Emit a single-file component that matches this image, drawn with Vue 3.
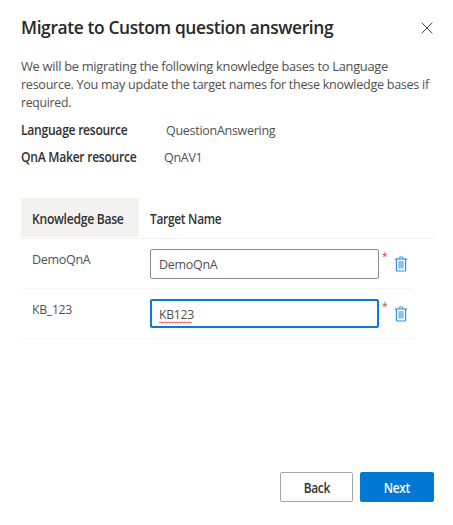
<script setup>
import { ref } from 'vue'

const rows = ref([
  { name: 'DemoQnA', target: 'DemoQnA', active: false },
  { name: 'KB_123', target: 'KB123', active: true },
])
</script>

<template>
  <main class="panel">
    <header class="head">
      <h1>Migrate to Custom question answering</h1>
      <button class="close" aria-label="Close">
        <svg width="12" height="12" viewBox="0 0 12 12"><path d="M.6.6l10.8 10.8M11.4.6L.6 11.4" fill="none" stroke="#444" stroke-width="1" /></svg>
      </button>
    </header>
    <p class="intro">
      <span class="fit l1">We will be migrating the following knowledge bases to Language</span>
      <span class="fit l2">resource. You may update the target names for these knowledge bases if</span>
      <span class="fit l3">required.</span>
    </p>
    <dl class="info">
      <div class="pair"><dt><span class="fit bold">Language resource</span></dt><dd class="fit">QuestionAnswering</dd></div>
      <div class="pair second"><dt class="maker"><span class="fit bold">QnA Maker resource</span></dt><dd class="fit">QnAV1</dd></div>
    </dl>
    <section class="table">
      <div class="thead">
        <div class="th kb"><span class="fit bold">Knowledge Base</span></div>
        <div class="th tn"><span class="fit tight">Target Name</span></div>
      </div>
      <div v-for="row in rows" :key="row.name" class="row">
        <div class="name"><span class="fit" :class="{ digits: row.active }">{{ row.name }}</span></div>
        <div class="field" :class="{ active: row.active }">
          <span class="fit" :class="{ digits: row.active }">{{ row.target }}<svg v-if="row.active" class="squiggle" width="38" height="3" viewBox="0 0 38 3"><path d="M0 2.3l1.5-1.6 1.5 1.6 1.5-1.6 1.5 1.6 1.5-1.6 1.5 1.6 1.5-1.6 1.5 1.6 1.5-1.6 1.5 1.6 1.5-1.6 1.5 1.6 1.5-1.6 1.5 1.6 1.5-1.6 1.5 1.6 1.5-1.6 1.5 1.6 1.5-1.6 1.5 1.6 1.5-1.6 1.5 1.6 1.5-1.6 1.5 1.6" fill="none" stroke="#ee3038" stroke-width=".9" /></svg></span>
        </div>
        <span class="star">*</span>
        <button class="trash" aria-label="Delete">
          <svg width="12" height="16" viewBox="0 0 12 16">
            <path d="M4 2.5v-1q0-.5.6-.5h2.8q.6 0 .6.5v1" fill="none" stroke="#3292df" />
            <path d="M0 3h12" stroke="#3292df" stroke-width="1.2" />
            <path d="M1.4 3v11q0 1 1 1h7.2q1 0 1-1V3" fill="none" stroke="#3292df" stroke-width="1.2" />
            <path d="M3.3 5h5.4v7.5H3.3z" fill="#b5d9f5" />
            <path d="M4.2 5v7.5M6 5v7.5M7.8 5v7.5" stroke="#63aeea" stroke-width=".9" />
          </svg>
        </button>
      </div>
    </section>
    <footer class="actions">
      <button class="btn back"><span>Back</span></button>
      <button class="btn next"><span>Next</span></button>
    </footer>
  </main>
</template>

<style>
body { margin: 0; background: #fff; }
</style>

<style scoped>
* { box-sizing: border-box; }
.panel {
  width: 453px; height: 525px; padding: 14px 19px 23px 21px;
  display: flex; flex-direction: column; background: #fff;
  font-family: "Open Sans", "Segoe UI", sans-serif; font-size: 13.4px; color: #505050;
  letter-spacing: -0.3px; white-space: nowrap;
}
button { padding: 0; border: 0; background: none; font: inherit; letter-spacing: inherit; display: flex; align-items: center; justify-content: center; }
.fit { position: relative; display: inline-block; transform: scaleX(.933); transform-origin: 0 50%; }
.bold { transform: scaleX(.905); }
.tight { transform: scaleX(.888); }
.digits { transform: scaleX(.912); }
.head { display: flex; justify-content: space-between; height: 26px; }
h1 { margin: 0; font-size: 18.5px; line-height: 26px; font-weight: 600; color: #292827; letter-spacing: -0.4px; transform: scaleX(.94); transform-origin: 0 50%; }
.close { width: 12px; height: 12px; margin: 8px 1px 0 0; }
.intro { margin: 17px 0 0; line-height: 18px; display: flex; flex-direction: column; align-items: flex-start; }
.l1 { transform: scaleX(.96); }
.l2 { transform: scaleX(.94); }
.l3 { transform: scaleX(.915); }
.info { margin: 10px 0 0; }
.pair { display: flex; height: 18px; line-height: 18px; }
.second { margin-top: 9px; }
dt { width: 145px; font-weight: 600; color: #323130; }
.maker { width: 143px; }
dd { margin: 0; }
.table { margin-top: 32px; }
.thead { width: 413px; height: 41px; display: flex; border-bottom: 1px solid #f0f0f0; }
.th { height: 39px; line-height: 39px; font-weight: 600; color: #323130; padding-top: 2px; }
.kb { width: 118px; padding-left: 11px; background: #f3f2f1; }
.tn { padding-left: 11px; }
.row { width: 392px; height: 50px; padding: 10px 0 0 11px; display: flex; border-bottom: 1px solid #f6f6f6; }
.name { width: 118px; line-height: 20px; }
.field { width: 229px; height: 30px; padding-left: 8px; line-height: 29px; border: 1px solid #8c8b8a; border-radius: 2px; }
.field.active { height: 29px; padding-left: 7px; border: 2px solid #0f78d4; line-height: 27px; }
.squiggle { position: absolute; left: 0; bottom: 4px; }
.star { width: 5px; margin-left: 3px; font-size: 10px; line-height: 14px; color: #b5454b; }
.trash { width: 12px; height: 16px; margin: 7px 0 0 8px; }
.actions { margin-top: auto; display: flex; justify-content: flex-end; gap: 7px; }
.btn { width: 73px; height: 30px; border-radius: 2px; font-weight: 600; }
.btn span { transform: scaleX(.89); padding-top: 1px; }
.back { border: 1px solid #a6a5a4; color: #323130; }
.next { width: 74px; background: #0078d4; color: #fff; }
</style>
